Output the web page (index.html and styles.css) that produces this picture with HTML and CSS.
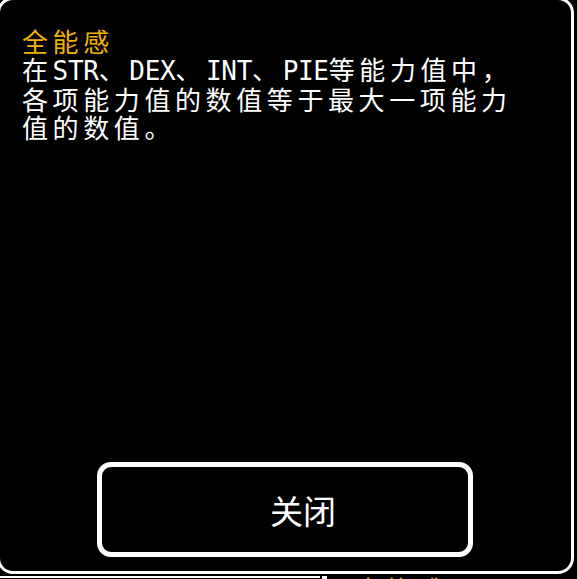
FILE: index.html
```html
<!DOCTYPE html>
<html lang="zh-CN">
<head>
<meta charset="utf-8">
<title>全能感</title>
<link rel="stylesheet" href="styles.css">
</head>
<body>
<div class="screen">
  <section class="dialog">
    <div class="content">
      <h1 class="title">全能感</h1>
      <p class="desc">在<span class="lat">STR</span>、<span class="lat">DEX</span>、<span class="lat">INT</span>、<span class="lat">PIE</span>等能力值中，各项能力值的数值等于最大一项能力值的数值。</p>
    </div>
    <button class="close" type="button">关闭</button>
  </section>
  <div class="under">
    <div class="under-line"></div>
    <div class="under-post"></div>
    <span class="under-label">全能感</span>
  </div>
</div>
</body>
</html>
```

FILE: styles.css
```css
html, body {
  margin: 0;
  padding: 0;
  background: #000;
}

body {
  width: 577px;
  height: 579px;
  overflow: hidden;
  font-family: "Noto Sans CJK SC", "Noto Sans", sans-serif;
  color: #fff;
}

.screen {
  width: 577px;
  height: 579px;
  overflow: hidden;
}

.dialog {
  box-sizing: border-box;
  width: 577px;
  height: 577px;
  margin: -3px 0 0 -3px;
  border: 3px solid #fff;
  border-radius: 16px;
  background: #000;
  display: flex;
  flex-direction: column;
  padding: 26px 0 14px 22px;
}

.content {
  width: 505px;
}

.title {
  margin: 0;
  font-size: 26px;
  font-weight: normal;
  line-height: 29px;
  letter-spacing: 4.6px;
  color: #f2b200;
}

.desc {
  margin: 0;
  font-size: 26px;
  line-height: 28px;
  letter-spacing: 4.6px;
  color: #fff;
}

.lat {
  font-family: "DejaVu Sans Mono", "Liberation Mono", monospace;
  letter-spacing: -0.3px;
}

.close {
  box-sizing: border-box;
  margin-top: auto;
  margin-left: 75px;
  width: 376px;
  height: 95px;
  border: 5px solid #fff;
  border-radius: 14px;
  background: #000;
  color: #fff;
  font-family: "Noto Sans CJK SC", "Noto Sans", sans-serif;
  font-size: 33px;
  padding: 0 0 0 36px;
  cursor: pointer;
}

.under {
  display: flex;
  align-items: flex-start;
  height: 5px;
  padding-top: 2px;
  overflow: hidden;
}

.under-line {
  width: 320px;
  height: 2px;
  background: #fff;
}

.under-post {
  margin-left: 2px;
  width: 5px;
  height: 3px;
  background: #fff;
}

.under-label {
  margin-left: 28px;
  margin-top: 3px;
  font-size: 26px;
  line-height: 20px;
  letter-spacing: 4.6px;
  color: #f2b200;
}
```
